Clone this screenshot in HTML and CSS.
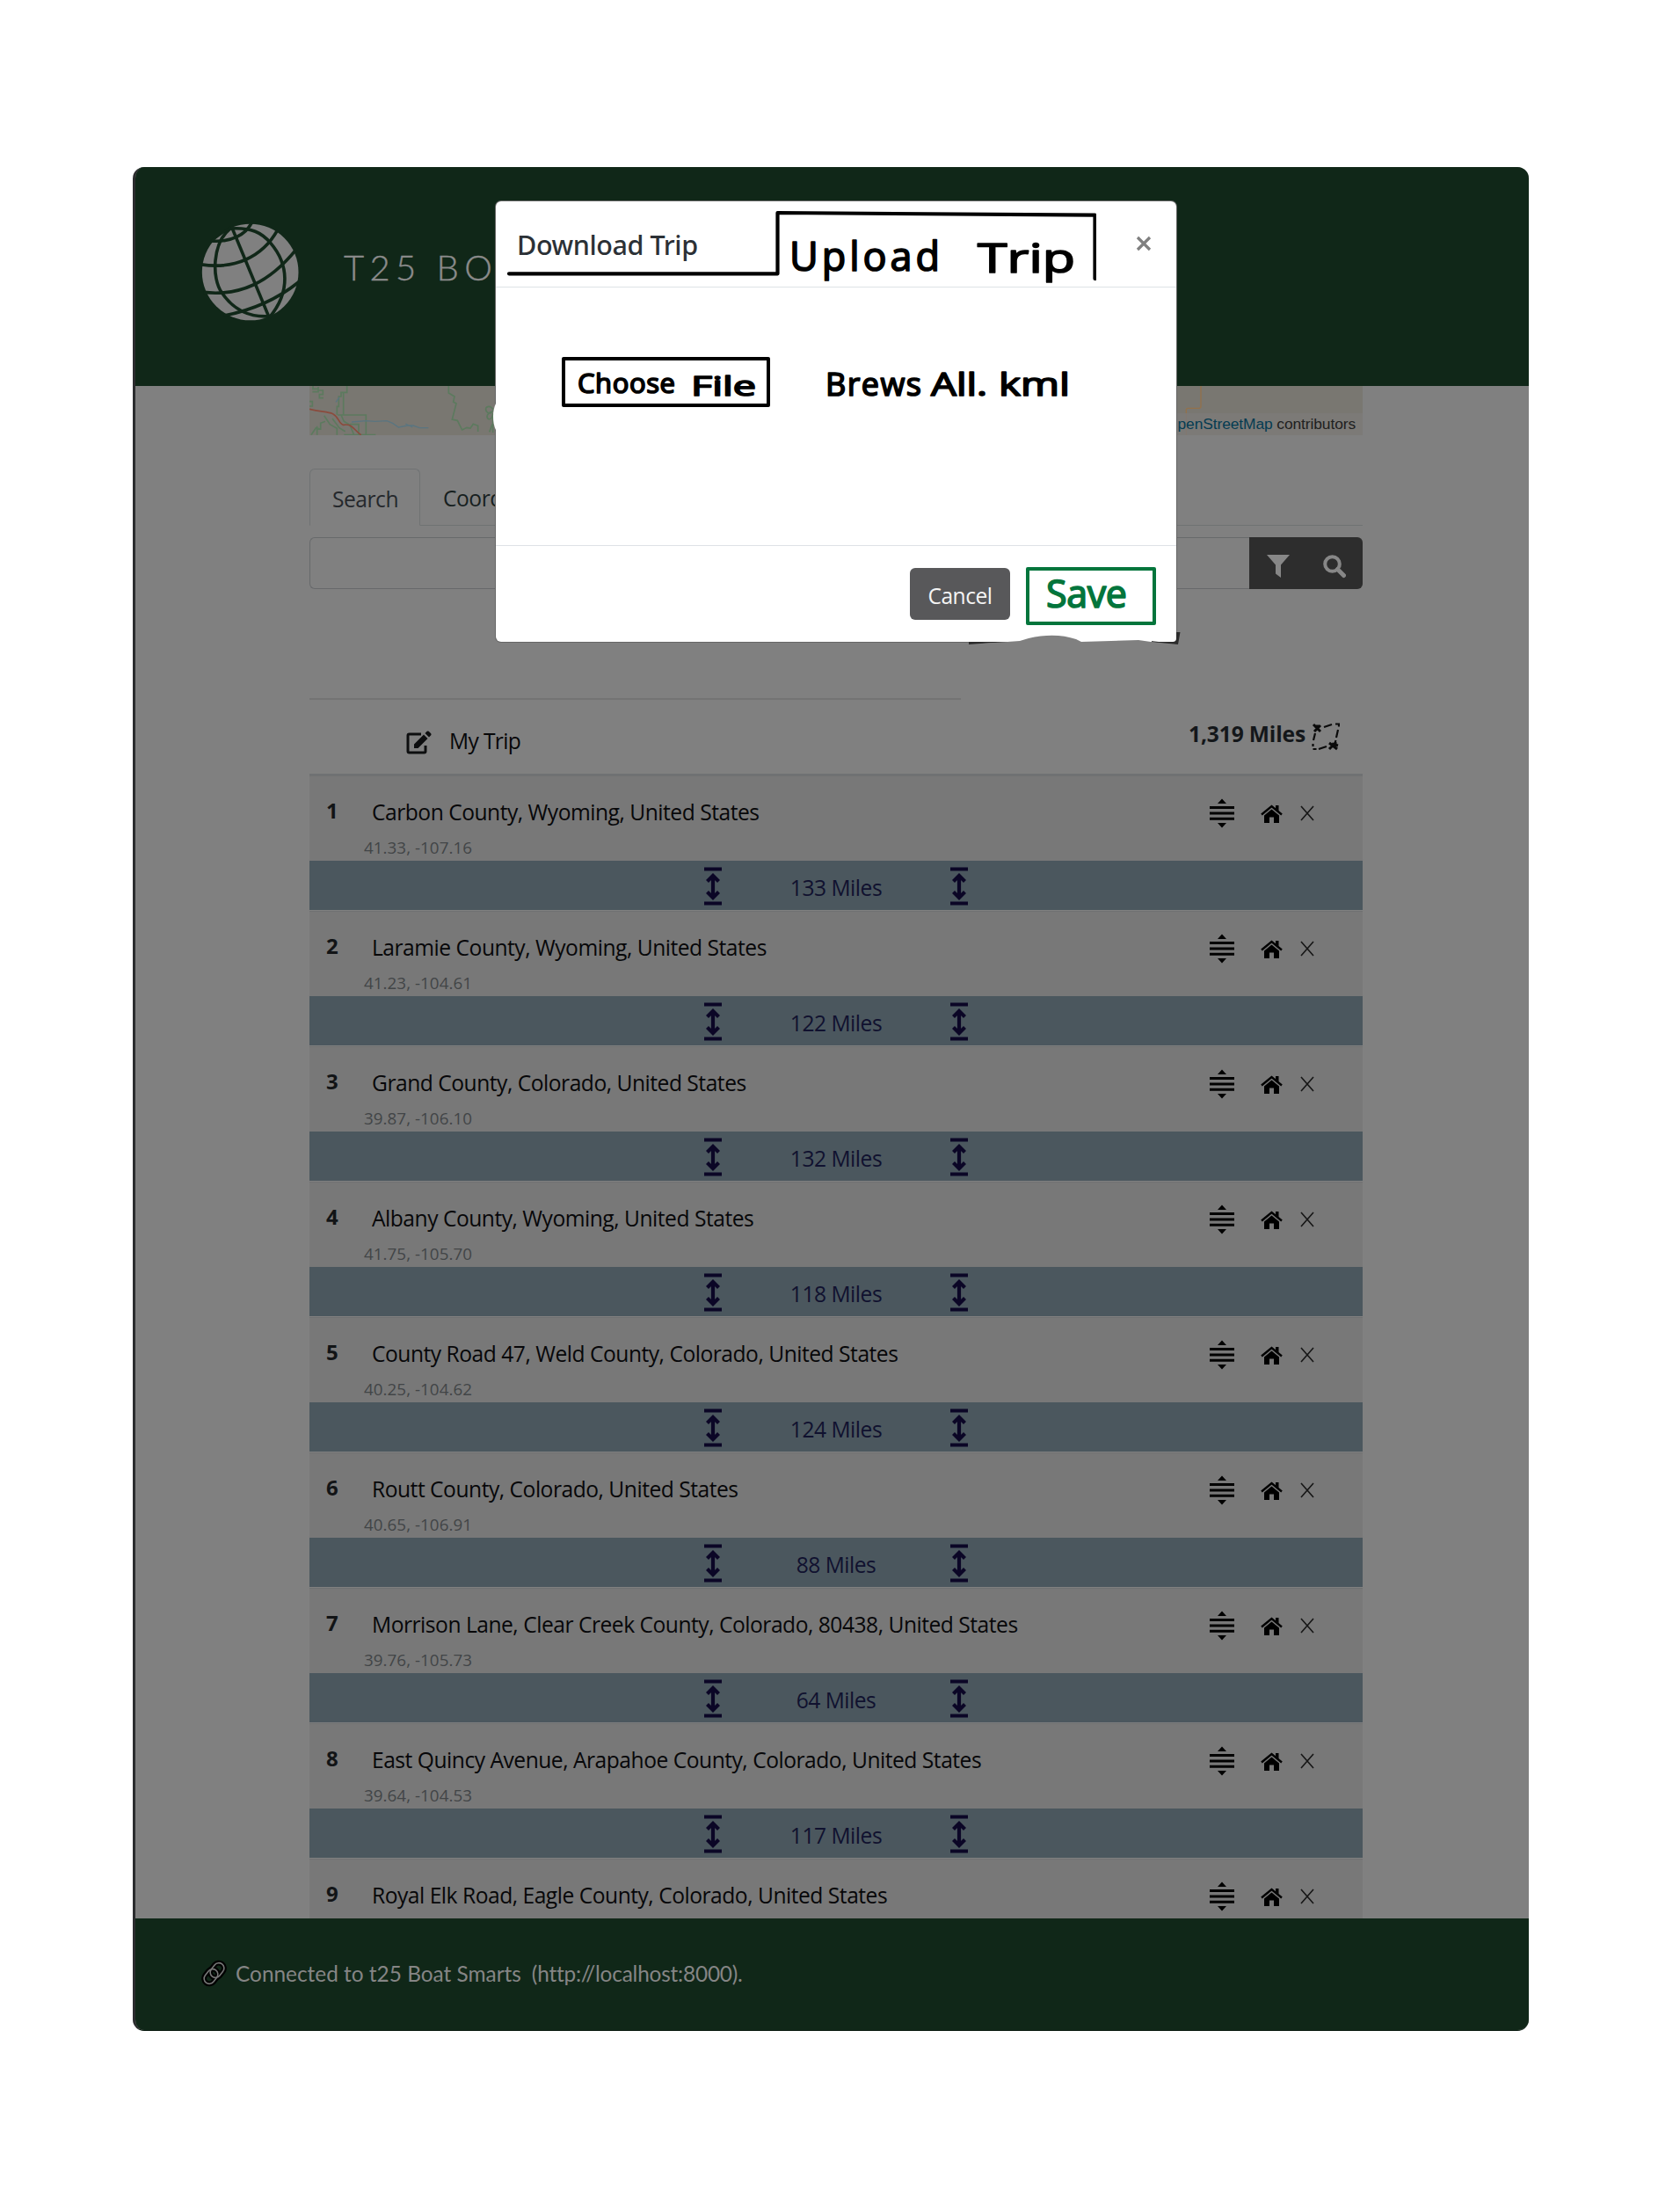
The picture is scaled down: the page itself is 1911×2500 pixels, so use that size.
FILE: index.html
```html
<!DOCTYPE html>
<html lang="en">
<head>
<meta charset="utf-8">
<title>T25 Boat Smarts</title>
<link rel="stylesheet" href="styles.css">
</head>
<body>
<svg class="defs" aria-hidden="true">
  <symbol id="span" viewBox="0 0 22 46"><path d="M1 3.500h20M1 42.500h20" stroke-width="4"/><path d="M11 10v27M4.500 17.500l6.500-6.500 6.500 6.500M4.500 29.500l6.500 6.500 6.500-6.500" stroke-width="4.200"/></symbol>
  <symbol id="drag" viewBox="0 0 28 34"><path d="M0 10.500h28M0 17h28M0 23.200h28" stroke="#000" stroke-width="3"/><path d="M14 .5l5 5.500H9zM14 33.500l5-5.500H9z"/></symbol>
  <symbol id="home" viewBox="0 0 25 21"><path d="M12.500 5.500l8.500 7V21h-6v-6.500h-5V21H4v-8.500z"/><path d="M1 11.500L12.500 2 24 11.500" fill="none" stroke="#000" stroke-width="2.400"/><path d="M17 1h3.500v6.500L17 4.500z"/></symbol>
  <symbol id="cross" viewBox="0 0 16 18"><path d="M1 1l14 16M15 1L1 17" stroke="#161616" stroke-width="1.600"/></symbol>
</svg>

<div class="frame">
  <header class="header">
    <svg class="globe" viewBox="268 222 333 334">
      <circle cx="435" cy="389" r="165" fill="#808080"/>
      <g fill="none" stroke="#102718" stroke-width="11">
        <path d="M372 236L500 545"/>
        <path d="M366 240C305 290 302 410 338 460C380 522 440 545 505 540"/>
        <path d="M366 240C440 235 475 255 505 290C565 360 575 455 500 545"/>
        <path d="M300 282C370 288 420 262 442 216"/>
        <path d="M266 363C380 380 475 340 528 246"/>
        <path d="M275 458C400 472 500 425 592 312"/>
        <path d="M345 538C450 518 530 480 602 422"/>
        <path d="M300 284L368 235" stroke-width="7"/>
      </g>
    </svg>
    <div class="brand">T25 BO</div>
  </header>

  <main class="main">
    <div class="map">
      <svg class="map-art" viewBox="12 9 3594 168" fill="none">
        <g stroke="#5c7a5e" stroke-width="5">
          <path d="M24 9v10h18v10h-20M42 12v12h16v14h-12v12h14M12 62h10v16h-10M140 9v22h-20v14h-8v34h-6v28M128 31v76M108 108h97v68M120 108l10 22 20 12 14 34M18 176l16-24 16 4v-20l16-6M38 176v-30M62 110l20 30 24 14v22M90 120l24 32 20 12M150 140h30v36M130 176h108"/>
          <path d="M487 9v24l20 12-4 18 10 6-14 54 18 4 16 32 16-8 12 2 10-14 16 6v20"/>
          <path d="M640 92c-10-20-34-14-24 4 8 10 18 6 20 0-16 4-24 20-12 26 8 2 14-10 14-20v66M626 166l10-26"/>
        </g>
        <path d="M12 88c40 10 60 8 80 16 20 10 20 34 36 38 30-6 36 18 60 34" stroke="#8b4b3d" stroke-width="5"/>
        <path d="M102 64l12-16M156 132l50-4 30 2 40-2 20 8 20 14 30-6 20 0 22 8 30 0M340 138l24 12" stroke="#5a7580" stroke-width="4"/>
        <path d="M3054 9v70q0 6-6 6h-38q-6 0-6 6v86" stroke="#93714b" stroke-width="4"/>
      </svg>
      <div class="credit"><span class="credit-link">penStreetMap</span> contributors</div>
    </div>

    <nav class="tabs">
      <div class="tab tab-active">Search</div>
      <div class="tab">Coord</div>
    </nav>

    <div class="search">
      <div class="search-input"></div>
      <div class="search-buttons">
        <svg width="26" height="27" viewBox="0 0 26 27"><path d="M0 0h26L16 11.500V26l-6-4.500v-10z" fill="#878787"/></svg>
        <svg width="26" height="27" viewBox="0 0 26 27" fill="none" stroke="#878787"><circle cx="10.500" cy="10.500" r="8.300" stroke-width="4"/><path d="M16.500 16.500l7 7" stroke-width="5" stroke-linecap="round"/></svg>
      </div>
    </div>

    <div class="rule"></div>
    <div class="trip-head">
      <svg class="edit" width="30" height="27" viewBox="0 0 30 27"><path d="M17 4H3.500Q2 4 2 5.500v18Q2 25 3.500 25h17q1.500 0 1.500-1.500V17" fill="none" stroke="#0d0e0f" stroke-width="3"/><path d="M9 15.500L20 4.500l4.500 4.500-11 11H9zM21.500 3l2.200-2.200q1-.8 2 0l2.500 2.500q.8 1 0 2L26 7.500z" fill="#0d0e0f"/></svg>
      <span class="trip-name">My Trip</span>
      <span class="total">1,319 Miles</span>
      <svg class="route" width="32" height="32" viewBox="0 0 32 32" fill="none" stroke="#0b0b0b" stroke-width="2.200"><path d="M14 5l9-3M27 1.500h4v3M30 8l-2 9M27.500 20l-1 3M4 12l-2 8M1.500 24v3M1.500 30h4M8 30l9-3"/><path d="M2 2l8 8M3 10l7-7M3 4h5M20 23l9 7M20 30l8-8M23 24l7 2" stroke-width="3"/></svg>
    </div>

    <div class="list">
      <div class="stop"><b>1</b><div class="place"><div class="name">Carbon County, Wyoming, United States</div><div class="coords">41.33, -107.16</div></div><svg class="i-drag"><use href="#drag"/></svg><svg class="i-home"><use href="#home"/></svg><svg class="i-cross"><use href="#cross"/></svg></div>
      <div class="leg"><svg><use href="#span"/></svg><span>133 Miles</span><svg><use href="#span"/></svg></div>
      <div class="stop"><b>2</b><div class="place"><div class="name">Laramie County, Wyoming, United States</div><div class="coords">41.23, -104.61</div></div><svg class="i-drag"><use href="#drag"/></svg><svg class="i-home"><use href="#home"/></svg><svg class="i-cross"><use href="#cross"/></svg></div>
      <div class="leg"><svg><use href="#span"/></svg><span>122 Miles</span><svg><use href="#span"/></svg></div>
      <div class="stop"><b>3</b><div class="place"><div class="name">Grand County, Colorado, United States</div><div class="coords">39.87, -106.10</div></div><svg class="i-drag"><use href="#drag"/></svg><svg class="i-home"><use href="#home"/></svg><svg class="i-cross"><use href="#cross"/></svg></div>
      <div class="leg"><svg><use href="#span"/></svg><span>132 Miles</span><svg><use href="#span"/></svg></div>
      <div class="stop"><b>4</b><div class="place"><div class="name">Albany County, Wyoming, United States</div><div class="coords">41.75, -105.70</div></div><svg class="i-drag"><use href="#drag"/></svg><svg class="i-home"><use href="#home"/></svg><svg class="i-cross"><use href="#cross"/></svg></div>
      <div class="leg"><svg><use href="#span"/></svg><span>118 Miles</span><svg><use href="#span"/></svg></div>
      <div class="stop"><b>5</b><div class="place"><div class="name">County Road 47, Weld County, Colorado, United States</div><div class="coords">40.25, -104.62</div></div><svg class="i-drag"><use href="#drag"/></svg><svg class="i-home"><use href="#home"/></svg><svg class="i-cross"><use href="#cross"/></svg></div>
      <div class="leg"><svg><use href="#span"/></svg><span>124 Miles</span><svg><use href="#span"/></svg></div>
      <div class="stop"><b>6</b><div class="place"><div class="name">Routt County, Colorado, United States</div><div class="coords">40.65, -106.91</div></div><svg class="i-drag"><use href="#drag"/></svg><svg class="i-home"><use href="#home"/></svg><svg class="i-cross"><use href="#cross"/></svg></div>
      <div class="leg"><svg><use href="#span"/></svg><span>88 Miles</span><svg><use href="#span"/></svg></div>
      <div class="stop"><b>7</b><div class="place"><div class="name">Morrison Lane, Clear Creek County, Colorado, 80438, United States</div><div class="coords">39.76, -105.73</div></div><svg class="i-drag"><use href="#drag"/></svg><svg class="i-home"><use href="#home"/></svg><svg class="i-cross"><use href="#cross"/></svg></div>
      <div class="leg"><svg><use href="#span"/></svg><span>64 Miles</span><svg><use href="#span"/></svg></div>
      <div class="stop"><b>8</b><div class="place"><div class="name">East Quincy Avenue, Arapahoe County, Colorado, United States</div><div class="coords">39.64, -104.53</div></div><svg class="i-drag"><use href="#drag"/></svg><svg class="i-home"><use href="#home"/></svg><svg class="i-cross"><use href="#cross"/></svg></div>
      <div class="leg"><svg><use href="#span"/></svg><span>117 Miles</span><svg><use href="#span"/></svg></div>
      <div class="stop stop-last"><b>9</b><div class="place"><div class="name">Royal Elk Road, Eagle County, Colorado, United States</div></div><svg class="i-drag"><use href="#drag"/></svg><svg class="i-home"><use href="#home"/></svg><svg class="i-cross"><use href="#cross"/></svg></div>
    </div>
  </main>

  <footer class="footer">
    <svg class="link" width="30" height="32" viewBox="0 0 30 32" fill="none"><g stroke="#000" stroke-width="6"><rect x="12" y="3" width="12" height="18" rx="6" transform="rotate(38 18 12)"/><rect x="5" y="10" width="12" height="18" rx="6" transform="rotate(38 11 19)"/></g><g stroke="#777" stroke-width="1.600"><rect x="12" y="3" width="12" height="18" rx="6" transform="rotate(38 18 12)"/><rect x="5" y="10" width="12" height="18" rx="6" transform="rotate(38 11 19)"/></g></svg>
    <span class="status">Connected to t25 Boat Smarts</span>
    <span class="host">(http://localhost:8000).</span>
  </footer>

  <section class="modal">
    <div class="modal-head">
      <h2 class="modal-title">Download Trip</h2>
      <svg class="upload-tab" width="672" height="90" viewBox="575 235 672 90">
        <path d="M579 311.300H884.500V242L1245.500 244.700V317" fill="none" stroke="#000" stroke-width="4.200" stroke-linecap="round" stroke-linejoin="round"/>
        <g class="hand" font-size="45"><text x="898" y="308" textLength="171">Upload</text><text x="1112" y="310" textLength="111" lengthAdjust="spacingAndGlyphs">Trip</text></g>
      </svg>
      <svg class="close" width="18" height="18" viewBox="0 0 18 18"><path d="M2 2l14 14M16 2L2 16" stroke="#7f7f7f" stroke-width="3.200"/></svg>
    </div>
    <div class="modal-body">
      <div class="choose"><svg width="229" height="49" viewBox="643 410 229 49"><g class="hand" font-size="31"><text x="657" y="447" textLength="111">Choose</text><text x="786" y="450" textLength="74" lengthAdjust="spacingAndGlyphs">File</text></g></svg></div>
      <svg class="file-name" width="290" height="57" viewBox="936 406 290 57"><g class="hand" font-size="36"><text x="939" y="450" textLength="109">Brews</text><text x="1059" y="450" textLength="64" lengthAdjust="spacingAndGlyphs">All.</text><text x="1136" y="450" textLength="81" lengthAdjust="spacingAndGlyphs">kml</text></g></svg>
    </div>
    <div class="modal-foot">
      <div class="cancel">Cancel</div>
      <div class="save"><svg width="140" height="58" viewBox="1171 649 140 58"><g class="hand hand-green" font-size="43"><text x="1190" y="691" textLength="92">Save</text></g></svg></div>
    </div>
    <svg class="edge" width="250" height="18" viewBox="1098 716 250 18"><path d="M1102 730h56l-30 1-26 2zM1310 729l28-3V719h4.500l-2.500 14-30-3z" fill="#2c2c2c"/><path d="M1118 732L1160 729 1170 726Q1200 719 1224 727L1230 730 1295 728 1316 731 1318 734H1118z" fill="#808080"/><path d="M1300 716h38v10q0 4-4 4H1318l-18-2z" fill="#fff"/></svg>
    <svg class="bump" width="3" height="30" viewBox="0 0 3 30"><path d="M3 0Q0 6 0 15T3 30z" fill="#fff"/></svg>
  </section>
</div>
</body>
</html>
```
FILE: styles.css
```css
* { box-sizing: border-box; }
body { margin: 0; padding: 190px 0 0 151px; background: #fff; font-family: "Open Sans", "Noto Sans", sans-serif; font-size: 24.600px; letter-spacing: -0.480px; color: #070709; }
svg { display: block; flex: none; }
.defs { position: absolute; width: 0; height: 0; }

.frame { position: relative; width: 1588px; height: 2120px; border-left: 3px solid #2b2c2e; border-bottom: 1px solid #0c1c12; border-radius: 13px; overflow: hidden; background: #808080; display: flex; flex-direction: column; }

.header { height: 249px; flex: none; background: #102718; display: flex; align-items: flex-start; padding: 64px 0 0 75px; gap: 51px; }
.globe { width: 111px; height: 111px; }
.brand { font: 300 40px/50px Lato, sans-serif; letter-spacing: 6.300px; color: #8b8b8b; -webkit-text-stroke: .4px #8b8b8b; padding-top: 25px; }

.main { height: 1743px; flex: none; overflow: hidden; margin-left: 198px; width: 1198px; }
.map { height: 56px; background: #797771; display: grid; overflow: hidden; }
.map > * { grid-area: 1 / 1; }
.map-art { width: 1198px; height: 56px; }
.credit { place-self: end; height: 25px; padding: 0 8px; background: #7d7b79cc; font: 17.400px/25px "Liberation Sans", sans-serif; letter-spacing: -0.100px; color: #202020; }
.credit-link { color: #043c52; }

.tabs { margin-top: 38px; height: 65px; display: flex; border-bottom: 1.500px solid #6f7273; }
.tab { width: 126px; height: 65px; padding-left: 26px; line-height: 67px; color: #17201f; }
.tab-active { border: 1.500px solid #6f7273; border-bottom-color: #808080; border-radius: 6px 6px 0 0; padding-left: 25px; color: #25282c; }

.search { margin-top: 13px; height: 59px; display: flex; }
.search-input { flex: 1; border: 1.500px solid #67696b; border-right: 0; border-radius: 6px 0 0 6px; }
.search-buttons { width: 129px; background: #2d2d2d; border-radius: 0 6px 6px 0; display: flex; gap: 38px; padding: 20px 0 0 20px; }

.rule { margin-top: 124px; width: 741px; height: 1.500px; background: #737373; }
.trip-head { height: 86px; display: flex; align-items: flex-start; border-bottom: 2px solid #6f7173; padding-left: 110px; }
.edit { margin-top: 35px; }
.trip-name { margin: 30px 0 0 19px; line-height: 34px; letter-spacing: -0.650px; }
.total { margin: 22px 7px 0 auto; line-height: 34px; font-weight: 700; letter-spacing: -0.150px; color: #14171a; }
.route { margin: 26px 26px 0 0; }

.stop { height: 98px; background: #787878; border-top: 1px solid #707172; display: flex; align-items: flex-start; }
.stop b { width: 71px; padding-left: 19px; margin-top: 22px; line-height: 34px; font-size: 24px; color: #121416; }
.place { flex: 1; }
.name { margin-top: 24px; line-height: 34px; }
.coords { margin: 11.500px 0 0 -9px; line-height: 24px; font-size: 18.800px; letter-spacing: 0.050px; color: #424547; }
.i-drag { width: 28px; height: 34px; margin: 25px 30px 0 0; }
.i-home { width: 25px; height: 21px; margin: 32px 20px 0 0; }
.i-cross { width: 16px; height: 18px; margin: 33.500px 55px 0 0; }
.stop-last { height: 69px; }
.leg { height: 56px; margin-top: -1px; margin-bottom: 1px; background: #4b575e; display: flex; justify-content: center; color: #10112f; }
.leg svg { width: 22px; height: 46px; margin-top: 6px; fill: none; stroke: #0b0626; }
.leg span { width: 258px; text-align: center; line-height: 61px; }

.footer { height: 128px; flex: none; background: #102718; display: flex; padding: 0 0 0 75px; font: 24.400px/126px Lato, sans-serif; letter-spacing: 0; color: #858585; }
.link { margin: 47px 9px 0 0; }
.host { margin-left: 12px; letter-spacing: -0.200px; }

.modal { position: absolute; left: 410px; top: 39px; width: 774px; height: 501px; background: #fff; border-radius: 6px; box-shadow: 0 0 0 1px #666; font-size: 24.600px; }
.modal-head { height: 98px; border-bottom: 1.500px solid #dee2e6; display: grid; grid-template-columns: 1fr auto; }
.modal-title { grid-area: 1 / 1; margin: 28px 0 0 24px; font-size: 30.500px; line-height: 42px; font-weight: 500; font-family: "Noto Sans", sans-serif; letter-spacing: -0.400px; color: #2c3136; }
.upload-tab { grid-area: 1 / 1; margin: 5.500px 0 0 11px; }
.close { grid-area: 1 / 2; margin: 38.500px 28.500px 0 0; }
.modal-body { height: 294px; border-bottom: 1.500px solid #dee2e6; display: flex; padding: 79px 0 0 75px; gap: 60px; }
.choose { width: 237px; height: 57px; border: 4px solid #000; border-radius: 2px; }
.hand { font-family: "Open Sans", sans-serif; font-weight: 400; letter-spacing: 0; fill: #000; stroke: #000; stroke-width: 1.700px; stroke-linejoin: round; }
.hand-green { fill: #04753c; stroke: #04753c; }
.modal-foot { display: flex; padding: 24px 0 0 471px; gap: 18px; }
.cancel { width: 114px; height: 59px; margin-top: 1px; border-radius: 6px; background: #58585a; color: #f4f4f4; text-align: center; line-height: 63px; }
.save { width: 148px; height: 66px; border: 4px solid #04753c; border-radius: 2px; }
.edge { position: absolute; left: 534px; top: 487px; }
.bump { position: absolute; left: -3px; top: 230px; }
```
